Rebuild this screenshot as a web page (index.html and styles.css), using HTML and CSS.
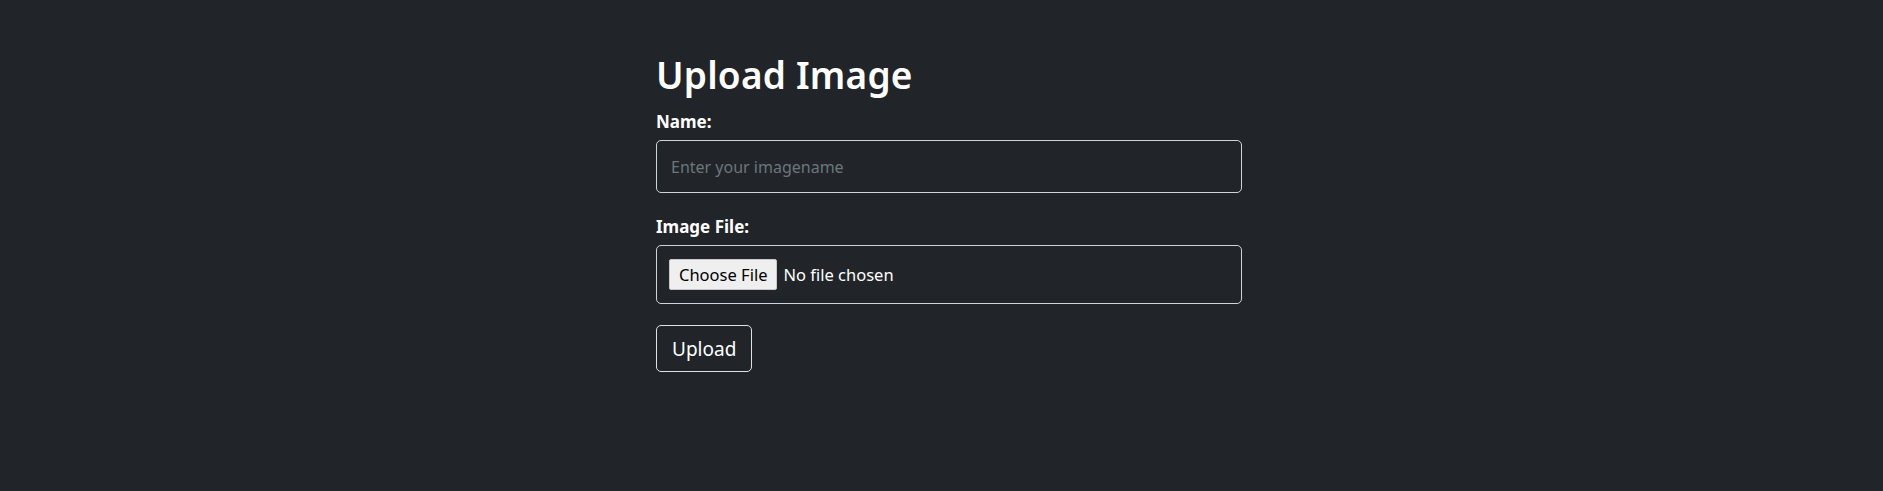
FILE: index.html
```html
<!DOCTYPE html>
<html lang="en">
<head>
<meta charset="utf-8">
<title>Upload Image</title>
<link rel="stylesheet" href="styles.css">
</head>
<body>
<main class="container">
  <h1 class="title">Upload Image</h1>
  <form class="upload-form">
    <div class="field">
      <label class="field-label" for="name">Name:</label>
      <input class="text-input" id="name" type="text" placeholder="Enter your imagename">
    </div>
    <div class="field">
      <label class="field-label">Image File:</label>
      <div class="file-box">
        <button type="button" class="file-btn">Choose File</button>
        <span class="file-name">No file chosen</span>
      </div>
    </div>
    <button type="submit" class="submit-btn">Upload</button>
  </form>
</main>
</body>
</html>
```

FILE: styles.css
```css
* {
  box-sizing: border-box;
}

html, body {
  margin: 0;
  background: #212529;
}

body {
  color: #ffffff;
  font-family: "Noto Sans", "Open Sans", sans-serif;
  height: 491px;
}

.container {
  width: 601px;
  margin: 0 auto;
  padding-left: 15px;
  padding-top: 53px;
}

.title {
  margin: 0 0 13px;
  font-size: 37px;
  font-weight: 600;
  line-height: 43px;
  letter-spacing: 0.2px;
}

.upload-form {
  display: flex;
  flex-direction: column;
  align-items: flex-start;
}

.field {
  width: 100%;
  display: flex;
  flex-direction: column;
  margin-bottom: 21px;
}

.field-label {
  font-size: 17px;
  font-weight: 700;
  line-height: 25px;
  margin-bottom: 6px;
}

.text-input {
  width: 100%;
  height: 53px;
  padding: 0 14px;
  background: transparent;
  border: 1px solid #ced4da;
  border-radius: 5px;
  color: #fff;
  font-family: inherit;
  font-size: 16px;
  outline: none;
}

.text-input::placeholder {
  color: #6c757d;
}

.file-box {
  width: 100%;
  height: 59px;
  display: flex;
  align-items: center;
  padding: 0 12px;
  border: 1px solid #ced4da;
  border-radius: 5px;
}

.file-btn {
  height: 31px;
  padding: 0 9px;
  background: #efefef;
  border: 1px solid #c8c8c8;
  border-radius: 2px;
  color: #000;
  font-family: inherit;
  font-size: 16.5px;
  line-height: 29px;
  margin-right: 6px;
}

.file-name {
  font-size: 16.5px;
  color: #fff;
}

.submit-btn {
  height: 47px;
  padding: 0 15px;
  background: transparent;
  border: 1px solid #dee2e6;
  border-radius: 5px;
  color: #fff;
  font-family: inherit;
  font-size: 19px;
}
```
